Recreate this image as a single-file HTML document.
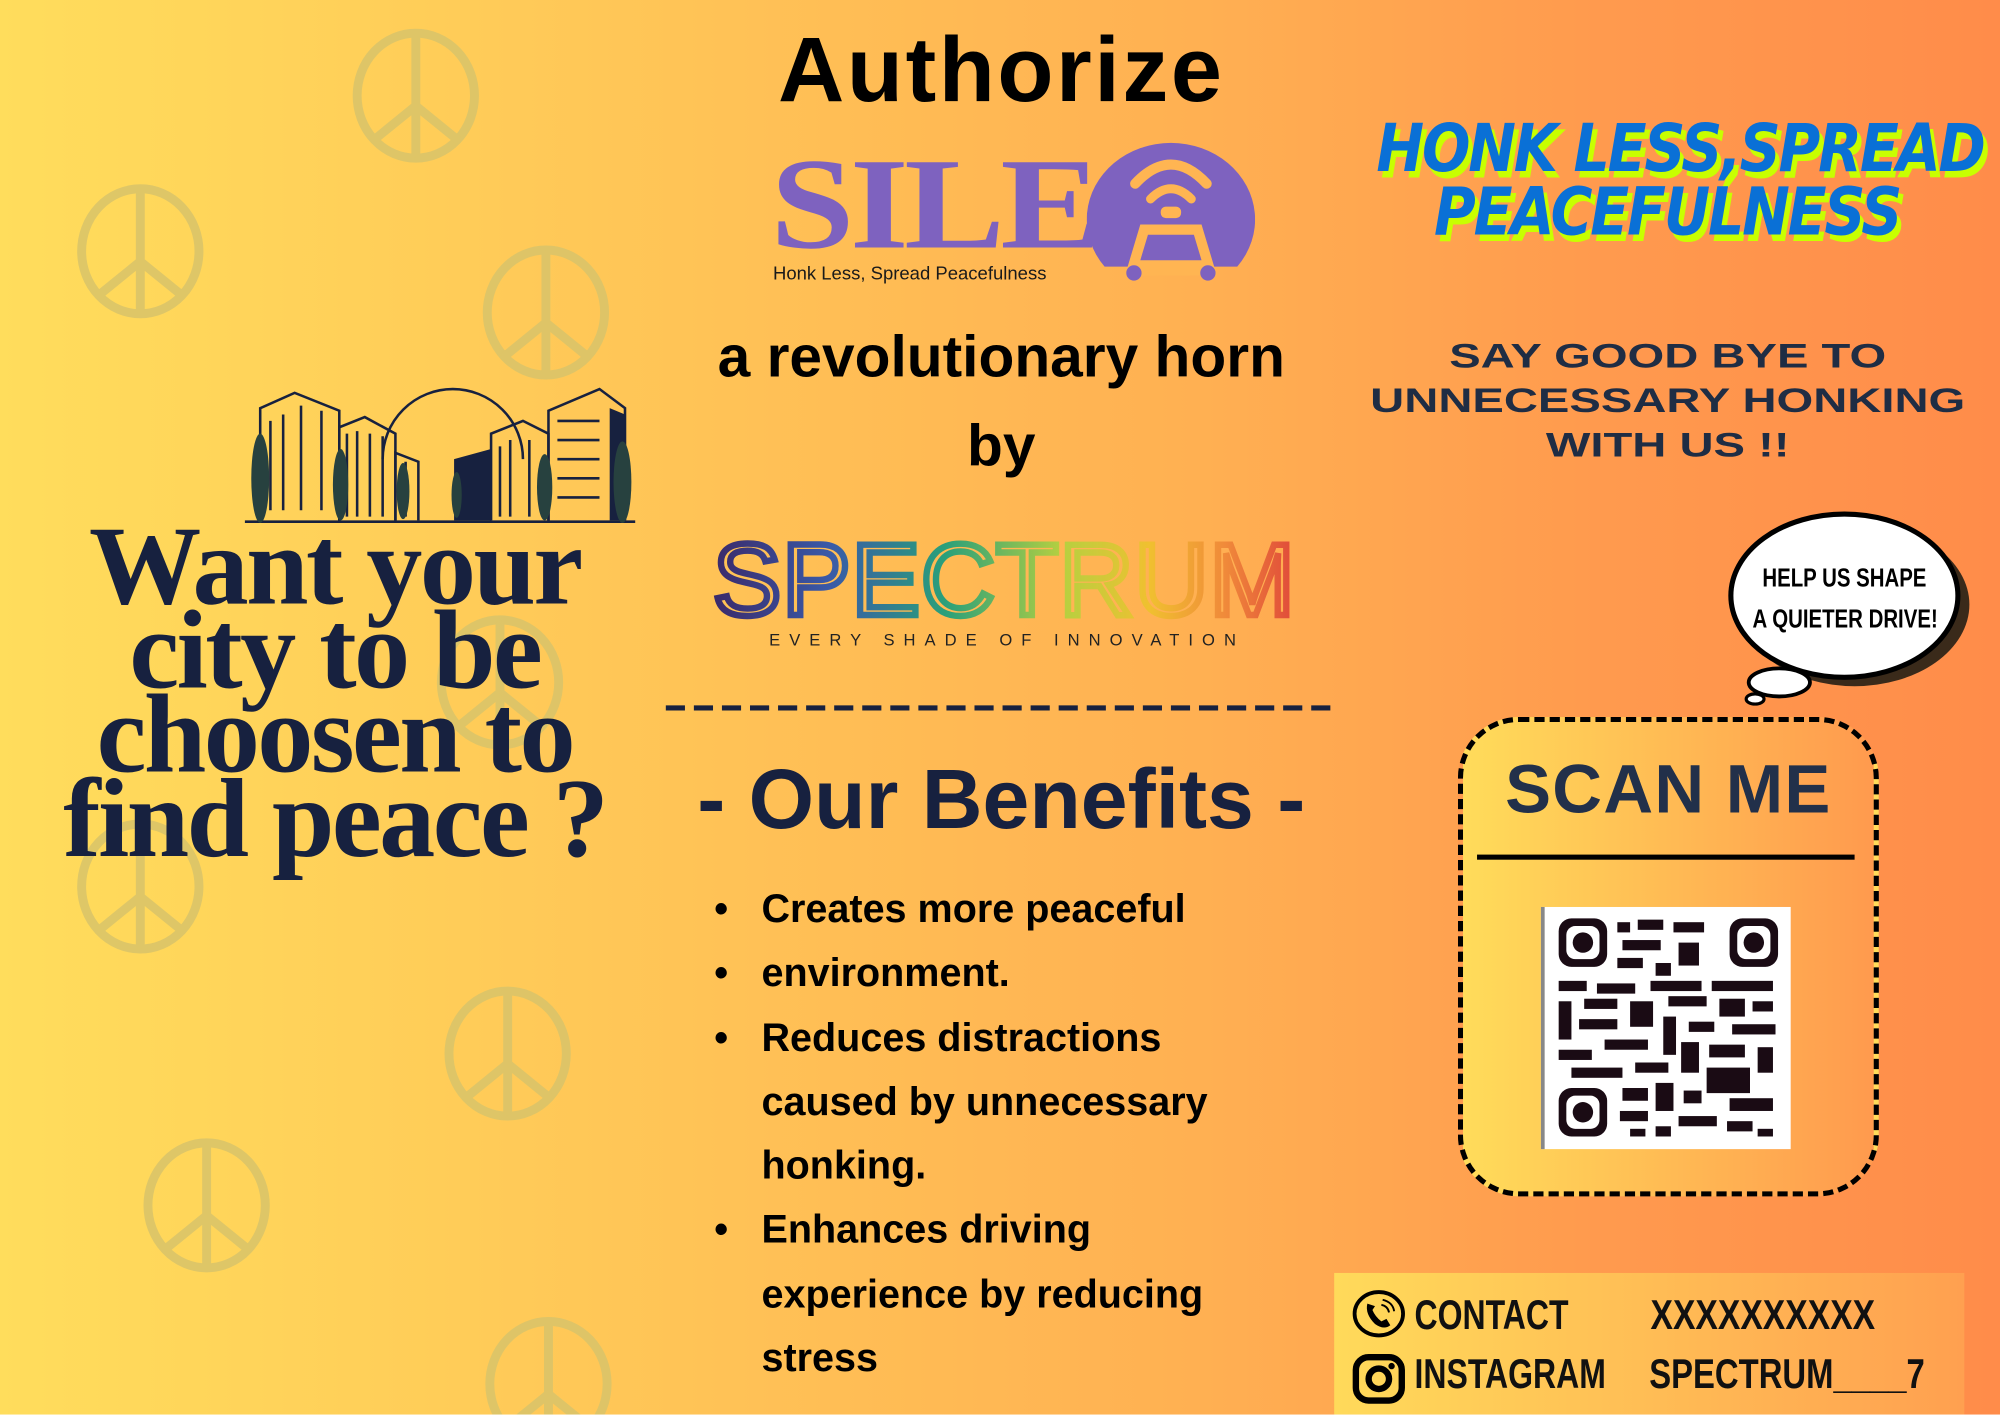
<!DOCTYPE html>
<html><head><meta charset="utf-8"><style>
html,body{margin:0;padding:0;width:2000px;height:1414px;overflow:hidden}
#w{position:absolute;left:0;top:0;width:1568px;height:1109px;transform:scale(1.27551);transform-origin:0 0;
background:linear-gradient(90deg,#ffdd5c 0%,#ffc757 30%,#ffb052 60%,#ff9a4e 80%,#ff8c4a 100%);overflow:hidden;font-family:"Liberation Sans",sans-serif}
.a{position:absolute;white-space:nowrap}
.c{text-align:center}
.b{font-weight:bold}
</style></head><body><div id="w">

<svg class="a" style="left:0;top:0" width="1568" height="1109">
<defs><g id="pc" fill="none" stroke="#d9c46a" stroke-width="7" stroke-linecap="round" opacity=".85">
<ellipse cx="0" cy="0" rx="46" ry="49"/><path d="M0 -45V45M0 8L-32 34M0 8L32 34"/></g></defs>
<use href="#pc" x="326" y="75"/><use href="#pc" x="110" y="197"/><use href="#pc" x="428" y="245"/>
<use href="#pc" x="392" y="535"/><use href="#pc" x="110" y="695"/><use href="#pc" x="398" y="826"/>
<use href="#pc" x="162" y="945"/><use href="#pc" x="430" y="1085"/>
<g fill="none" stroke="#17213f" stroke-width="2">
<path d="M300 360A55 55 0 0 1 410 360"/>
<path d="M204 408V320L231 308L266 322V408M212 330V400M222 325V400M236 318V400M252 322V400"/>
<path d="M266 408V335L286 327L310 340V408M272 340V405M280 338V405M290 340V405M300 342V405"/>
<path d="M310 408V355L328 362V408M318 362V405"/>
<path d="M385 408V340L410 330L430 340V408M392 350V405M400 345V405M415 345V405"/>
<path d="M430 408V322L470 305L490 320V408M437 330H470M437 345H470M437 360H470M437 375H470M437 390H470"/>
<path d="M192 409H498"/>
</g>
<path d="M356 408V360L385 352V408Z" fill="#17213f"/>
<path d="M478 320L490 325V408H478Z" fill="#17213f"/>
<g fill="#27413f"><ellipse cx="204" cy="375" rx="7" ry="35"/><ellipse cx="267" cy="380" rx="6" ry="28"/><ellipse cx="316" cy="385" rx="5" ry="22"/><ellipse cx="358" cy="388" rx="4" ry="18"/><ellipse cx="427" cy="382" rx="6" ry="26"/><ellipse cx="488" cy="378" rx="7" ry="32"/></g>
<line x1="522" y1="555" x2="1050" y2="555" stroke="#17213f" stroke-width="4" stroke-dasharray="15 7"/>
</svg>

<div class="a b c" style="left:500px;top:14px;width:570px;font-size:72px;color:#000;letter-spacing:2px">Authorize</div>

<div class="a" style="left:604px;top:110px;font-family:'Liberation Serif',serif;font-weight:bold;font-size:102px;color:#7e62bf;letter-spacing:-3px;transform:scaleX(1.16);transform-origin:0 0;line-height:1">SILE</div>
<div class="a" style="left:606px;top:207px;font-size:14.5px;color:#1a1a1a">Honk Less, Spread Peacefulness</div>
<svg class="a" style="left:852px;top:104px" width="132" height="120">
<path d="M14 105A66 60 0 1 1 118 105Z" fill="#7e62bf"/>
<path d="M38 40Q66 10 94 40" fill="none" stroke="#ffb552" stroke-width="8" stroke-linecap="round"/>
<path d="M50 52Q66 36 82 52" fill="none" stroke="#ffb552" stroke-width="7" stroke-linecap="round"/>
<rect x="58" y="58" width="16" height="9" rx="4" fill="#ffb552"/>
<path d="M30 112L42 72H90L102 112Z" fill="#ffb552"/>
<path d="M42 100L48 80H84L90 100Z" fill="#7e62bf"/>
<circle cx="37" cy="110" r="6" fill="#7e62bf"/><circle cx="95" cy="110" r="6" fill="#7e62bf"/>
</svg>

<div class="a b c" style="left:500px;top:252px;width:570px;font-size:46px;color:#000">a revolutionary horn</div>
<div class="a b c" style="left:500px;top:322px;width:570px;font-size:46px;color:#000">by</div>

<svg class="a" style="left:555px;top:410px" width="470" height="110">
<defs><linearGradient id="sg" x1="0" x2="1"><stop offset="0" stop-color="#3b2a6a"/><stop offset=".2" stop-color="#3a5aa8"/><stop offset=".4" stop-color="#2aa07a"/><stop offset=".6" stop-color="#b6d040"/><stop offset=".75" stop-color="#f0c030"/><stop offset=".88" stop-color="#f08a3a"/><stop offset="1" stop-color="#e04a3a"/></linearGradient></defs>
<text x="4" y="72" font-family="Liberation Sans" font-size="80" fill="none" stroke="url(#sg)" stroke-width="5" textLength="456" lengthAdjust="spacing">SPECTRUM</text>
<text x="48" y="96" font-family="Liberation Sans" font-size="13" fill="#222" textLength="366" lengthAdjust="spacing">EVERY SHADE OF INNOVATION</text>
</svg>

<div class="a b c" style="left:480px;top:588px;width:610px;font-size:66px;color:#17213f">- Our Benefits -</div>

<div class="a b" style="left:560px;top:688px;font-size:31px;line-height:50.3px;color:#000">
<div><span style="display:inline-block;width:37px">•</span>Creates more peaceful</div>
<div><span style="display:inline-block;width:37px">•</span>environment.</div>
<div><span style="display:inline-block;width:37px">•</span>Reduces distractions</div>
<div style="padding-left:37px">caused by unnecessary</div>
<div style="padding-left:37px">honking.</div>
<div><span style="display:inline-block;width:37px">•</span>Enhances driving</div>
<div style="padding-left:37px">experience by reducing</div>
<div style="padding-left:37px">stress</div>
</div>

<div class="a c" style="left:0;top:412px;width:525px;font-family:'Liberation Serif',serif;font-weight:bold;font-size:88px;line-height:66px;color:#17213f;letter-spacing:-2px">Want your<br>city to be<br>choosen to<br>find peace ?</div>

<div class="a c" style="left:1042px;top:92px;width:530px;font-family:'DejaVu Sans',sans-serif;font-weight:bold;font-style:italic;font-size:52px;line-height:50px;color:#0a70d6;text-shadow:4px 5px 0 #c8ff00;transform:scaleX(.86);letter-spacing:-2px">HONK LESS,SPREAD<br>PEACEFULNESS</div>

<div class="a b c" style="left:1050px;top:262px;width:515px;font-size:27px;line-height:35px;color:#1f2d44;transform:scaleX(1.37)">SAY GOOD BYE TO<br>UNNECESSARY HONKING<br>WITH US !!</div>

<svg class="a" style="left:1350px;top:398px" width="200" height="160">
<ellipse cx="100" cy="72" rx="90" ry="64" fill="#3a2a1a" transform="translate(4,4)"/>
<ellipse cx="96" cy="69" rx="89" ry="64" fill="#fff" stroke="#000" stroke-width="4"/>
<ellipse cx="45" cy="137" rx="24" ry="11" fill="#fff" stroke="#000" stroke-width="3"/>
<ellipse cx="26" cy="150" rx="7" ry="4" fill="#fff" stroke="#000" stroke-width="2.5"/>
</svg>
<div class="a b c" style="left:1356px;top:438px;width:180px;font-size:20px;line-height:32px;color:#000;transform:scaleX(.8)">HELP US SHAPE<br>A QUIETER DRIVE!</div>

<div class="a" style="left:1143px;top:562px;width:322px;height:368px;border:4px dashed #000;border-radius:48px;background:linear-gradient(90deg,#ffdc5a,#ff9a4e)"></div>
<div class="a b c" style="left:1143px;top:588px;width:330px;font-size:54px;color:#22304a;letter-spacing:1px">SCAN ME</div>
<div class="a" style="left:1158px;top:670px;width:296px;height:4px;background:#000"></div>
<svg class="a" style="left:1208px;top:711px" width="196" height="190">
<rect width="196" height="190" fill="#fff"/><rect x="0" width="3" height="190" fill="#888"/>
<g fill="#1a0b14">
<rect x="14" y="9" width="38" height="38" rx="10"/><rect x="148" y="9" width="38" height="38" rx="10"/><rect x="14" y="142" width="38" height="38" rx="10"/>
</g>
<g fill="#fff"><rect x="20" y="15" width="26" height="26" rx="7"/><rect x="154" y="15" width="26" height="26" rx="7"/><rect x="20" y="148" width="26" height="26" rx="7"/></g>
<g fill="#1a0b14"><circle cx="33" cy="28" r="8"/><circle cx="167" cy="28" r="8"/><circle cx="33" cy="161" r="8"/>
<rect x="60" y="12" width="10" height="8"/><rect x="76" y="10" width="20" height="8"/><rect x="104" y="12" width="24" height="8"/><rect x="64" y="26" width="30" height="8"/><rect x="108" y="28" width="16" height="18"/><rect x="60" y="40" width="20" height="8"/><rect x="90" y="44" width="12" height="10"/>
<rect x="14" y="58" width="22" height="8"/><rect x="44" y="60" width="30" height="8"/><rect x="86" y="58" width="40" height="8"/><rect x="134" y="58" width="48" height="8"/>
<rect x="14" y="74" width="10" height="30"/><rect x="34" y="72" width="26" height="8"/><rect x="70" y="74" width="18" height="20"/><rect x="100" y="70" width="30" height="8"/><rect x="140" y="72" width="20" height="14"/><rect x="166" y="74" width="16" height="8"/>
<rect x="30" y="88" width="30" height="8"/><rect x="96" y="86" width="10" height="30"/><rect x="116" y="90" width="20" height="8"/><rect x="150" y="92" width="34" height="8"/>
<rect x="14" y="112" width="26" height="8"/><rect x="50" y="104" width="34" height="8"/><rect x="110" y="106" width="14" height="24"/><rect x="132" y="108" width="28" height="10"/><rect x="170" y="110" width="12" height="20"/>
<rect x="24" y="126" width="40" height="8"/><rect x="74" y="122" width="26" height="8"/><rect x="130" y="126" width="34" height="20"/>
<rect x="64" y="142" width="20" height="10"/><rect x="90" y="138" width="14" height="22"/><rect x="112" y="144" width="14" height="10"/><rect x="148" y="150" width="34" height="10"/>
<rect x="62" y="160" width="22" height="8"/><rect x="108" y="164" width="30" height="8"/><rect x="146" y="168" width="20" height="8"/><rect x="70" y="174" width="12" height="6"/><rect x="90" y="172" width="12" height="8"/><rect x="170" y="174" width="12" height="6"/></g>
</svg>

<div class="a" style="left:1046px;top:998px;width:494px;height:111px;background:linear-gradient(90deg,#ffda5a,#ffa050)"></div>
<svg class="a" style="left:1060px;top:1008px" width="46" height="95">
<ellipse cx="21" cy="22" rx="19" ry="17" fill="none" stroke="#000" stroke-width="3"/>
<path d="M12 14Q10 22 18 30Q25 35 30 31L27 26L23 28Q18 24 16 19L18 16Z" fill="#000"/>
<path d="M23 15Q28 16 29 21M24 11Q32 13 33 20" fill="none" stroke="#000" stroke-width="1.5"/>
<rect x="3" y="56" width="36" height="34" rx="10" fill="none" stroke="#000" stroke-width="5"/>
<circle cx="21" cy="73" r="8" fill="none" stroke="#000" stroke-width="5"/><circle cx="31" cy="63" r="2.5" fill="#000"/>
</svg>
<div class="a b" style="left:1109px;top:1012px;font-size:33px;color:#111;transform:scaleX(.76);transform-origin:0 0">CONTACT</div>
<div class="a b" style="left:1109px;top:1058px;font-size:33px;color:#111;transform:scaleX(.76);transform-origin:0 0">INSTAGRAM</div>
<div class="a b" style="left:1294px;top:1012px;font-size:33px;color:#111;transform:scaleX(.8);transform-origin:0 0">XXXXXXXXXX</div>
<div class="a b" style="left:1293px;top:1058px;font-size:33px;color:#111;transform:scaleX(.78);transform-origin:0 0">SPECTRUM____7</div>

</div></body></html>
